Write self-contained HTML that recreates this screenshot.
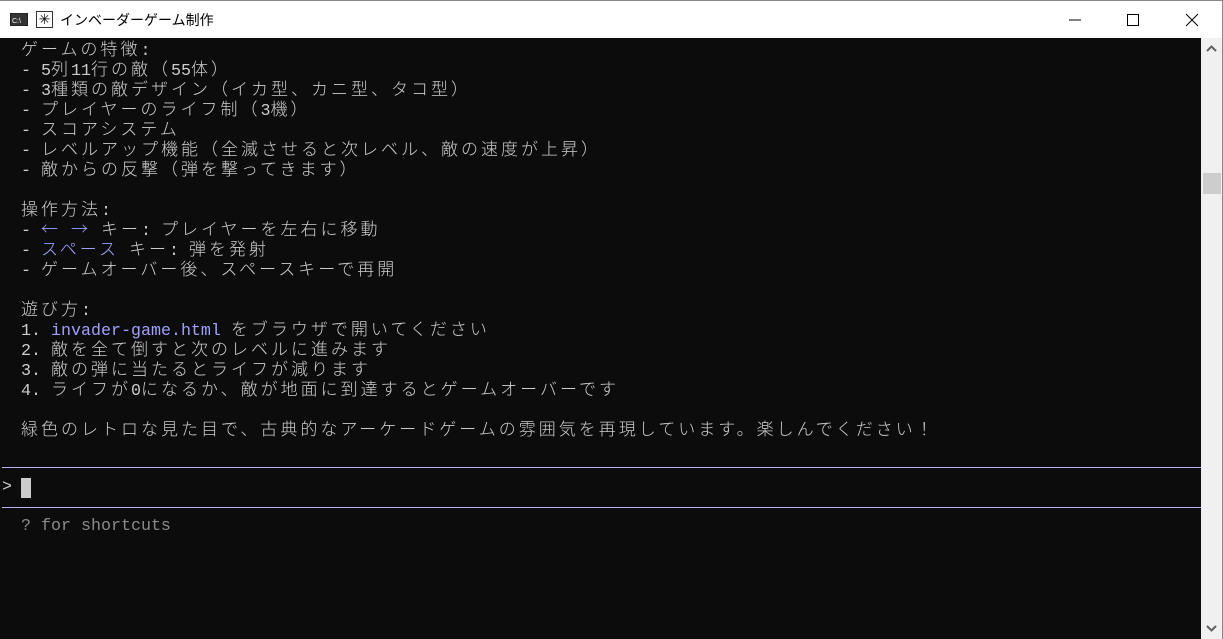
<!DOCTYPE html>
<html><head><meta charset="utf-8"><style>
*{margin:0;padding:0;box-sizing:border-box}
body{width:1223px;height:639px;overflow:hidden;background:#0c0c0c;font-family:"Liberation Mono","Noto Sans CJK JP",monospace;color:#cccccc;position:relative}
.tb{position:absolute;left:0;top:0;width:1223px;height:38px;background:#fff;border-top:1px solid #888;font-family:"Liberation Sans","Noto Sans CJK JP",sans-serif}
.tb .t{position:absolute;left:60px;top:9px;font-size:14px;color:#000}
.sb{position:absolute;left:1201px;top:38px;width:21px;height:601px;background:#f0f0f0}
.edge{position:absolute;left:1222px;top:0;width:1px;height:639px;background:#888}
.th{position:absolute;left:1203px;top:173px;width:18px;height:21px;background:#cdcdcd}
.ln{position:absolute;left:21px;height:20px;line-height:20px;font-size:16.67px;white-space:pre}
.j{font-family:"Noto Sans CJK JP",sans-serif;font-size:17px;letter-spacing:3px;font-weight:300}
.b{color:#a0a0ff}
.hr{position:absolute;left:2px;width:1199px;height:1px;background:#b4b4e6}
</style></head><body>
<div class="tb">
<svg style="position:absolute;left:10px;top:12px" width="18" height="13"><rect width="18" height="13" fill="#222"/><rect x="1" y="1" width="16" height="11" fill="#333"/><text x="2" y="10" font-size="7" fill="#fff" font-family="Liberation Sans">C:\</text></svg>
<div style="position:absolute;left:36px;top:10px;width:17px;height:17px;border:1px solid #333;font-size:14px;line-height:15px;text-align:center;color:#000">✳</div>
<div class="t">インベーダーゲーム制作</div>
<svg style="position:absolute;left:1068px;top:12px" width="14" height="14"><line x1="1" y1="7" x2="13" y2="7" stroke="#000"/></svg>
<svg style="position:absolute;left:1126px;top:12px" width="14" height="14"><rect x="1.5" y="1.5" width="11" height="11" fill="none" stroke="#000"/></svg>
<svg style="position:absolute;left:1185px;top:12px" width="14" height="14"><path d="M1 1L13 13M13 1L1 13" stroke="#000"/></svg>
</div>
<div class="sb"></div><div class="th"></div><div class="edge"></div>
<svg style="position:absolute;left:1205px;top:44px" width="13" height="10"><path d="M2 7L6.5 2.5L11 7" stroke="#606060" stroke-width="2" fill="none"/></svg>
<svg style="position:absolute;left:1205px;top:624px" width="13" height="10"><path d="M2 2L6.5 6.5L11 2" stroke="#606060" stroke-width="2" fill="none"/></svg>

<div class="ln" style="top:38px"><span class="j">ゲームの特徴</span>:</div>
<div class="ln" style="top:58px">- 5<span class="j">列</span>11<span class="j">行の敵（</span>55<span class="j">体）</span></div>
<div class="ln" style="top:78px">- 3<span class="j">種類の敵デザイン（イカ型、カニ型、タコ型）</span></div>
<div class="ln" style="top:98px">- <span class="j">プレイヤーのライフ制（</span>3<span class="j">機）</span></div>
<div class="ln" style="top:118px">- <span class="j">スコアシステム</span></div>
<div class="ln" style="top:138px">- <span class="j">レベルアップ機能（全滅させると次レベル、敵の速度が上昇）</span></div>
<div class="ln" style="top:158px">- <span class="j">敵からの反撃（弾を撃ってきます）</span></div>
<div class="ln" style="top:198px"><span class="j">操作方法</span>:</div>
<div class="ln" style="top:218px">- <span class="b j">←</span> <span class="b j">→</span> <span class="j">キー</span>: <span class="j">プレイヤーを左右に移動</span></div>
<div class="ln" style="top:238px">- <span class="b j">スペース</span> <span class="j">キー</span>: <span class="j">弾を発射</span></div>
<div class="ln" style="top:258px">- <span class="j">ゲームオーバー後、スペースキーで再開</span></div>
<div class="ln" style="top:298px"><span class="j">遊び方</span>:</div>
<div class="ln" style="top:318px">1. <span class="b">invader-game.html</span> <span class="j">をブラウザで開いてください</span></div>
<div class="ln" style="top:338px">2. <span class="j">敵を全て倒すと次のレベルに進みます</span></div>
<div class="ln" style="top:358px">3. <span class="j">敵の弾に当たるとライフが減ります</span></div>
<div class="ln" style="top:378px">4. <span class="j">ライフが</span>0<span class="j">になるか、敵が地面に到達するとゲームオーバーです</span></div>
<div class="ln" style="top:418px"><span class="j">緑色のレトロな見た目で、古典的なアーケードゲームの雰囲気を再現しています。楽しんでください！</span></div>

<div class="hr" style="top:467px"></div>
<div class="ln" style="top:478px;left:2px">&gt;</div>
<div style="position:absolute;left:21px;top:478px;width:10px;height:20px;background:#cccccc"></div>
<div class="hr" style="top:507px"></div>
<div class="ln" style="top:517px;color:#8a8a8a">? for shortcuts</div>
</body></html>
